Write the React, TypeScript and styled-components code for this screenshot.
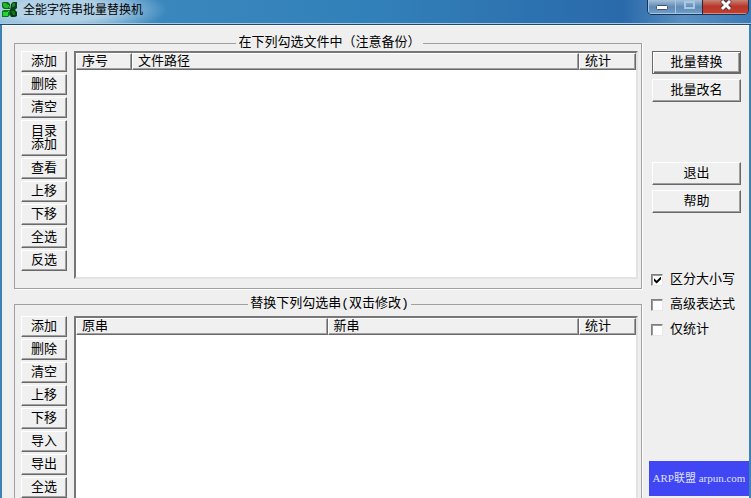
import React from "react";
import styled, { createGlobalStyle, css } from "styled-components";

const GlobalStyle = createGlobalStyle`
  * { box-sizing: border-box; }
  html, body { margin: 0; padding: 0; height: 100%; overflow: hidden; }
  body, button, input {
    font-family: "Liberation Mono", "Noto Sans CJK SC", sans-serif;
    font-size: 13px;
    line-height: 13px;
    color: #000;
  }
`;

const Window = styled.div`
  display: flex;
  flex-direction: column;
  height: 100vh;
  overflow: hidden;
  background: #efefef;
`;

const TitleBar = styled.header`
  display: flex;
  flex: none;
  align-items: flex-start;
  height: 25px;
  padding: 0 2px;
  border-bottom: 1px solid #1d4a73;
  box-shadow: inset 0 -1px 0 #a5cbe6;
  background:
    radial-gradient(ellipse 105px 24px at 62px 10px, rgba(196, 220, 236, 0.8) 45%, rgba(150, 195, 225, 0) 100%),
    linear-gradient(90deg, #7fb4d8 0, #3a87bd 165px, #3280b9 50%, #2a6aab 83%, #5a8fc0 91%, #3d7ab4 100%);
`;

const AppIcon = styled.svg`
  flex: none;
  width: 16px;
  height: 16px;
  margin-top: 2px;
`;

const Title = styled.h1`
  flex: 1;
  margin: 0;
  padding-left: 5px;
  font-size: 12px;
  font-weight: 400;
  line-height: 22px;
`;

const CaptionButtons = styled.div`
  display: flex;
  height: 15px;
  border: 1px solid #17345a;
  border-top: 0;
  border-radius: 0 0 5px 5px;
  overflow: hidden;
`;

const CaptionButton = styled.button<{ $close?: boolean }>`
  display: flex;
  justify-content: center;
  width: ${(p) => (p.$close ? 46 : 27)}px;
  padding: 0;
  border: 0;
  border-left: ${(p) => (p.$close ? "1px solid #3a2030" : "1px solid #a9c5df")};
  box-shadow: inset 0 -1px 0 rgba(255, 255, 255, 0.4);
  background: ${(p) =>
    p.$close
      ? "linear-gradient(180deg, #c98478 0, #b8372a 45%, #c2402f 100%)"
      : "linear-gradient(180deg, #a4bfd8 0, #5f8ab5 50%, #6f9fca 100%)"};
  svg { display: block; }
`;

const Frame = styled.div`
  display: flex;
  flex: 1;
  min-height: 0;
  border: solid #3b83b4;
  border-width: 0 2px;
  box-shadow: inset 0 1px 0 #fff;
`;

const Groups = styled.main`
  display: flex;
  flex: 1;
  flex-direction: column;
  gap: 8px;
  min-width: 0;
  padding: 11px 0 0 12px;
`;

const Group = styled.fieldset<{ $topGap: number }>`
  flex: none;
  min-width: 0;
  margin: 0;
  padding: ${(p) => p.$topGap}px 3px 9px 6px;
  border: 1px solid #a0a0a0;
  box-shadow: 1px 1px 0 #fff;
`;

const Legend = styled.legend`
  margin: 0 auto;
  padding: 0 2px;
  line-height: 14px;
`;

const GroupBody = styled.div`
  display: flex;
  gap: 7px;
  min-width: 0;
`;

const ButtonColumn = styled.div`
  display: flex;
  flex: none;
  flex-direction: column;
  gap: 2px;
  width: 46px;
`;

const raised = css`
  border: 1px solid;
  border-color: #fff #696969 #696969 #fff;
  box-shadow: inset -1px -1px 0 #a0a0a0;
  background: #f0f0f0;
`;

const ToolButton = styled.button<{ $tall?: boolean }>`
  ${raised}
  flex: none;
  height: ${(p) => (p.$tall ? 36 : 21)}px;
  padding: 0 9px;
  white-space: ${(p) => (p.$tall ? "normal" : "nowrap")};
`;

const ListBox = styled.div`
  flex: 1;
  min-width: 0;
  min-height: 228px;
  border: 2px solid;
  border-color: #777 #e3e3e3 #e3e3e3 #777;
  background: #fff;
`;

const ListTable = styled.table`
  width: 100%;
  table-layout: fixed;
  border-spacing: 0;
`;

const HeaderCell = styled.th<{ $width?: number }>`
  ${raised}
  width: ${(p) => (p.$width ? `${p.$width}px` : "auto")};
  height: 17px;
  padding: 0 5px;
  font-weight: 400;
  line-height: 14px;
  text-align: left;
`;

const SideBar = styled.aside`
  display: flex;
  flex: none;
  flex-direction: column;
  width: 107px;
  padding: 26px 8px 0 10px;
`;

const ActionGroup = styled.div`
  display: flex;
  flex-direction: column;
  gap: 5px;
  margin-bottom: 60px;
`;

const ActionButton = styled.button<{ $primary?: boolean }>`
  ${raised}
  height: 23px;
  padding: 0;
  ${(p) =>
    p.$primary &&
    css`
      border-color: #696969;
      box-shadow: inset 1px 1px 0 #fff, inset -1px -1px 0 #696969, inset -2px -2px 0 #a0a0a0;
    `}
`;

const Options = styled.div`
  display: flex;
  flex-direction: column;
  gap: 12px;
  margin-left: -1px;
`;

const Option = styled.label`
  display: flex;
  align-items: center;
  gap: 7px;
  white-space: nowrap;
`;

const CheckBox = styled.input`
  appearance: none;
  flex: none;
  width: 12px;
  height: 12px;
  margin: 0;
  border: 1px solid;
  border-color: #808080 #e8e8e8 #e8e8e8 #808080;
  background: #fff;
  box-shadow: inset 1px 1px 0 #999;
  &:checked::after {
    content: "";
    display: block;
    width: 7px;
    height: 7px;
    margin: 2px;
    background: #000;
    clip-path: polygon(0 25%, 38% 60%, 100% 0, 100% 40%, 38% 100%, 0 65%);
  }
`;

const Watermark = styled.div`
  position: fixed;
  right: 2px;
  bottom: 2px;
  width: 100px;
  height: 35px;
  color: #dfe0ff;
  background: #4146f5;
  font: 11px/35px "Liberation Serif", "Noto Sans CJK SC", serif;
  text-align: center;
  white-space: nowrap;
`;

type Column = { label: string; width?: number };

type ListGroupProps = { title: string; topGap: number; actions: string[]; columns: Column[] };

function ListGroup({ title, topGap, actions, columns }: ListGroupProps) {
  return (
    <Group $topGap={topGap}>
      <Legend>{title}</Legend>
      <GroupBody>
        <ButtonColumn>
          {actions.map((label) => (
            <ToolButton key={label} type="button" $tall={label.length > 2}>
              {label}
            </ToolButton>
          ))}
        </ButtonColumn>
        <ListBox>
          <ListTable aria-label={title}>
            <thead>
              <tr>
                {columns.map((c) => (
                  <HeaderCell key={c.label} scope="col" $width={c.width}>
                    {c.label}
                  </HeaderCell>
                ))}
              </tr>
            </thead>
          </ListTable>
        </ListBox>
      </GroupBody>
    </Group>
  );
}

export default function App() {
  return (
    <>
      <GlobalStyle />
      <Window>
        <TitleBar>
          <AppIcon viewBox="0 0 16 16" aria-hidden="true">
            <path d="M1 0h5l2 2v5H2L0 5V1z" fill="#0a6a1a" />
            <path d="M9 2l2-2h4v6l-2 2H8z" fill="#0b4418" />
            <path d="M0 9l2-1h6v5l-2 2H0z" fill="#0a7a1c" />
            <path d="M8 8h5l2 2v4l-2 1H9l-1-2z" fill="#063f12" />
            <path d="M1 1h3l2 2v3H3L1 4z" fill="#22b52c" />
            <path d="M1 10h4l1 1v3H1z" fill="#1fd42c" />
            <path d="M11 1h2v3l-2 1h-1V3z" fill="#158a2a" />
            <path d="M9 9h3l1 2v2h-2z" fill="#0f7a20" />
            <path d="M6 3l2 3M7 9l-3 3" stroke="#3fe044" fill="none" />
          </AppIcon>
          <Title>全能字符串批量替换机</Title>
          <CaptionButtons>
            <CaptionButton type="button" aria-label="最小化">
              <svg width="14" height="14" viewBox="0 0 14 14">
                <rect x="1.5" y="5.5" width="11" height="4" rx="1" fill="#fff" stroke="#42536b" />
              </svg>
            </CaptionButton>
            <CaptionButton type="button" aria-label="最大化">
              <svg width="14" height="14" viewBox="0 0 14 14">
                <rect x="3" y="2" width="9" height="6" fill="none" stroke="#a8c7e2" strokeWidth="2" />
              </svg>
            </CaptionButton>
            <CaptionButton type="button" aria-label="关闭" $close>
              <svg width="14" height="14" viewBox="0 0 14 14">
                <path d="M3 0l8 9M11 0L3 9" stroke="#5b3038" strokeWidth="5" />
                <path d="M3 1l8 8M11 1L3 9" stroke="#fff" strokeWidth="3" />
              </svg>
            </CaptionButton>
          </CaptionButtons>
        </TitleBar>
        <Frame>
          <Groups>
            <ListGroup
              title="在下列勾选文件中（注意备份）"
              topGap={1}
              actions={["添加", "删除", "清空", "目录添加", "查看", "上移", "下移", "全选", "反选"]}
              columns={[{ label: "序号", width: 56 }, { label: "文件路径" }, { label: "统计", width: 57 }]}
            />
            <ListGroup
              title="替换下列勾选串(双击修改)"
              topGap={5}
              actions={["添加", "删除", "清空", "上移", "下移", "导入", "导出", "全选"]}
              columns={[{ label: "原串" }, { label: "新串" }, { label: "统计", width: 57 }]}
            />
          </Groups>
          <SideBar>
            <ActionGroup>
              <ActionButton type="button" $primary>批量替换</ActionButton>
              <ActionButton type="button">批量改名</ActionButton>
            </ActionGroup>
            <ActionGroup>
              <ActionButton type="button">退出</ActionButton>
              <ActionButton type="button">帮助</ActionButton>
            </ActionGroup>
            <Options>
              <Option><CheckBox type="checkbox" defaultChecked />区分大小写</Option>
              <Option><CheckBox type="checkbox" />高级表达式</Option>
              <Option><CheckBox type="checkbox" />仅统计</Option>
            </Options>
          </SideBar>
        </Frame>
        <Watermark>ARP联盟 arpun.com</Watermark>
      </Window>
    </>
  );
}
